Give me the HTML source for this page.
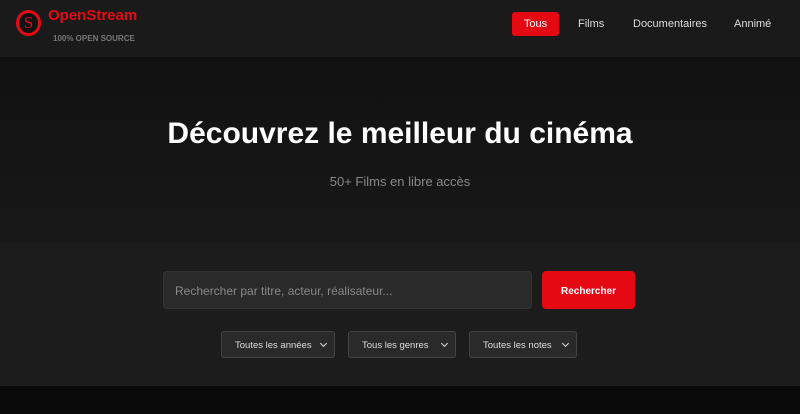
<!DOCTYPE html>
<html><head><meta charset="utf-8"><style>
*{margin:0;padding:0;box-sizing:border-box}
body{width:800px;height:414px;background:#0a0a0a;font-family:"Liberation Sans",sans-serif;overflow:hidden;position:relative}
.hdr{position:absolute;left:0;top:0;width:800px;height:57px;background:#1a1a1a;box-shadow:0 2px 4px rgba(0,0,0,.5)}
.logo{position:absolute;left:16px;top:10px;width:25px;height:26px;border:3px solid #e50914;border-radius:50%;color:#e50914;font-family:"Liberation Serif",serif;font-size:17px;text-align:center;line-height:20px;background:#111}
.brand{position:absolute;left:48px;top:7px;color:#e50914;font-weight:bold;font-size:15px}
.tag{position:absolute;left:53px;top:34px;color:#777;font-size:8px;font-weight:bold}
.nav a{position:absolute;top:12px;height:24px;line-height:25px;font-size:11px;color:#ddd}
.hero{position:absolute;left:0;top:57px;width:800px;height:186px;background:linear-gradient(#111,#181818)}
h1{position:absolute;top:117px;width:800px;text-align:center;color:#fff;font-size:30px;font-weight:bold}
.sub{position:absolute;top:174px;width:800px;text-align:center;color:#888;font-size:13px}
.srch{position:absolute;left:0;top:243px;width:800px;height:143px;background:#1c1c1c}
.inp{position:absolute;left:163px;top:271px;width:369px;height:38px;background:#2a2a2a;border:1px solid #333;border-radius:4px;color:#888;font-size:12px;line-height:38px;padding-left:11px}
.btn{position:absolute;left:542px;top:271px;width:93px;height:38px;background:#e50914;border-radius:4px;color:#fff;font-size:10px;font-weight:bold;text-align:center;line-height:41px}
.sel{position:absolute;top:331px;height:27px;background:#2a2a2a;border:1px solid #444;border-radius:3px;color:#ddd;font-size:9.5px;line-height:28px;padding-left:13px}
.sel:after{content:"";position:absolute;right:8px;top:9px;width:4px;height:4px;border-right:1.3px solid #ddd;border-bottom:1.3px solid #ddd;transform:rotate(45deg)}
</style></head><body>
<div class="hdr">
<div class="logo">S</div>
<div class="brand">OpenStream</div>
<div class="tag">100% OPEN SOURCE</div>
<div class="nav">
<a style="left:512px;width:47px;background:#e50914;border-radius:3px;text-align:center;color:#fff">Tous</a>
<a style="left:578px">Films</a>
<a style="left:633px">Documentaires</a>
<a style="left:734px">Annimé</a>
</div>
</div>
<div class="hero"></div>
<h1>Découvrez le meilleur du cinéma</h1>
<div class="sub">50+ Films en libre accès</div>
<div class="srch"></div>
<div class="inp">Rechercher par titre, acteur, réalisateur...</div>
<div class="btn">Rechercher</div>
<div class="sel" style="left:221px;width:114px">Toutes les années</div>
<div class="sel" style="left:348px;width:108px">Tous les genres</div>
<div class="sel" style="left:469px;width:108px">Toutes les notes</div>
</body></html>
